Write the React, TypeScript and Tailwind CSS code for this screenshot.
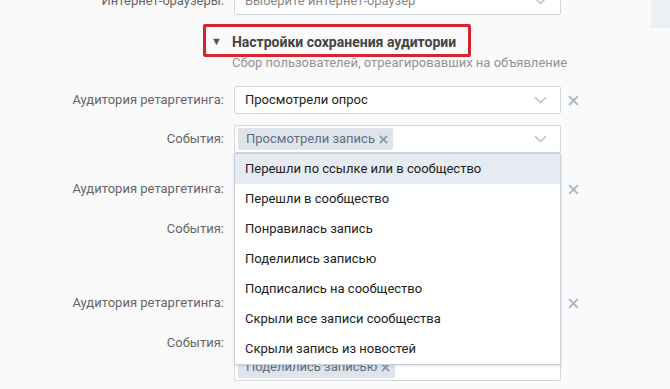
import React from "react";

const Chevron = () => (
  <svg width="13" height="8" viewBox="0 0 13 8" className="shrink-0">
    <path d="M1 1.2 L6.5 6.5 L12 1.2" fill="none" stroke="#b4bcc6" strokeWidth="1.3" />
  </svg>
);

const Cross = ({ size = 11, color = "#a3b3c4", sw = 2 }: { size?: number; color?: string; sw?: number }) => (
  <svg width={size} height={size} viewBox="0 0 10 10" className="shrink-0">
    <path d="M1 1 L9 9 M9 1 L1 9" stroke={color} strokeWidth={sw} strokeLinecap="butt" />
  </svg>
);

const Tag = ({ text }: { text: string }) => (
  <div className="m-[1px] h-[22px] flex items-center pl-[8px] pr-[5px] bg-[#dde4eb] text-[#5e6f84] text-[13px] rounded-[2px] gap-[4px]">
    <span>{text}</span>
    <Cross size={9} color="#8598ac" sw={2} />
  </div>
);

function Row({
  label,
  children,
  removable,
  className = "",
}: {
  label: string;
  children: React.ReactNode;
  removable?: boolean;
  className?: string;
}) {
  return (
    <div className={"flex items-start " + className}>
      <div className="w-[224px] text-right text-[13px] leading-[28px] text-[#666] shrink-0">{label}</div>
      <div className="ml-[10px] w-[327px] shrink-0 relative">{children}</div>
      {removable && (
        <div className="h-[28px] flex items-center ml-[7px]">
          <Cross color="#a8b7c7" sw={1.8} />
        </div>
      )}
    </div>
  );
}

const SingleSelect = ({ value, muted }: { value: string; muted?: boolean }) => (
  <div className="h-[28px] border border-[#d3d9de] bg-white flex items-center pl-[10px] pr-[13px] rounded-[2px]">
    <span className={"flex-1 text-[13px] " + (muted ? "text-[#888]" : "text-[#222]")}>{value}</span>
    <Chevron />
  </div>
);

const MultiSelect = ({ tags, children }: { tags: string[]; children?: React.ReactNode }) => (
  <div className="relative min-h-[28px] border border-[#d3d9de] bg-white flex items-start py-[1px] pl-[2px] pr-[13px] rounded-[2px]">
    <div className="flex-1 flex flex-col items-start">
      {tags.map((t) => (
        <Tag key={t} text={t} />
      ))}
    </div>
    <div className="h-[24px] flex items-center">
      <Chevron />
    </div>
    {children}
  </div>
);

const items = [
  "Перешли по ссылке или в сообщество",
  "Перешли в сообщество",
  "Понравилась запись",
  "Поделились записью",
  "Подписались на сообщество",
  "Скрыли все записи сообщества",
  "Скрыли запись из новостей",
];

export default function App() {
  return (
    <div className="min-h-screen bg-[#fafafa] flex font-['Roboto','Liberation_Sans',sans-serif] overflow-hidden">
      <div className="w-[651px] shrink-0">
        <Row label="Интернет-браузеры:" className="-mt-[13px]">
          <SingleSelect value="Выберите интернет-браузер" muted />
        </Row>

        <div className="mt-[9px] ml-[203px] inline-flex items-center border-[3px] border-[#d7232c] rounded-[2px] pl-[5px] pr-[12px] pt-[5px] pb-[2px]">
          <span className="text-[11px] text-[#555] leading-[20px] mr-[10px]">▼</span>
          <span className="text-[14px] font-bold text-[#444] leading-[20px]">Настройки сохранения аудитории</span>
        </div>
        <div className="-mt-[2px] ml-[232px] text-[13px] leading-[16px] text-[#939393]">
          Сбор пользователей, отреагировавших на объявление
        </div>

        <Row label="Аудитория ретаргетинга:" removable className="mt-[15px]">
          <SingleSelect value="Просмотрели опрос" />
        </Row>
        <Row label="События:" className="mt-[11px] relative z-10">
          <MultiSelect tags={["Просмотрели запись"]}>
            <div className="absolute left-[-1px] top-[calc(100%+1px)] w-[327px] bg-white border border-[#c5d0db] shadow-[0_1px_3px_rgba(0,0,0,0.12)]">
              {items.map((it, i) => (
                <div
                  key={it}
                  className={
                    "h-[30px] flex items-center pl-[10px] text-[13px] text-[#222] " +
                    (i === 0 ? "bg-[#e5ebf1]" : "")
                  }
                >
                  {it}
                </div>
              ))}
            </div>
          </MultiSelect>
        </Row>

        <Row label="Аудитория ретаргетинга:" removable className="mt-[22px]">
          <SingleSelect value="Просмотрели запись" />
        </Row>
        <Row label="События:" className="mt-[12px]">
          <MultiSelect tags={["Просмотрели запись", "Перешли в сообщество"]} />
        </Row>

        <Row label="Аудитория ретаргетинга:" removable className="mt-[22px]">
          <SingleSelect value="Просмотрели запись" />
        </Row>
        <Row label="События:" className="mt-[12px]">
          <MultiSelect tags={["Понравилась запись", "Поделились записью"]} />
        </Row>
      </div>
      <div className="w-[19px] h-[28px] bg-[#edf0f3] shrink-0" />
    </div>
  );
}
